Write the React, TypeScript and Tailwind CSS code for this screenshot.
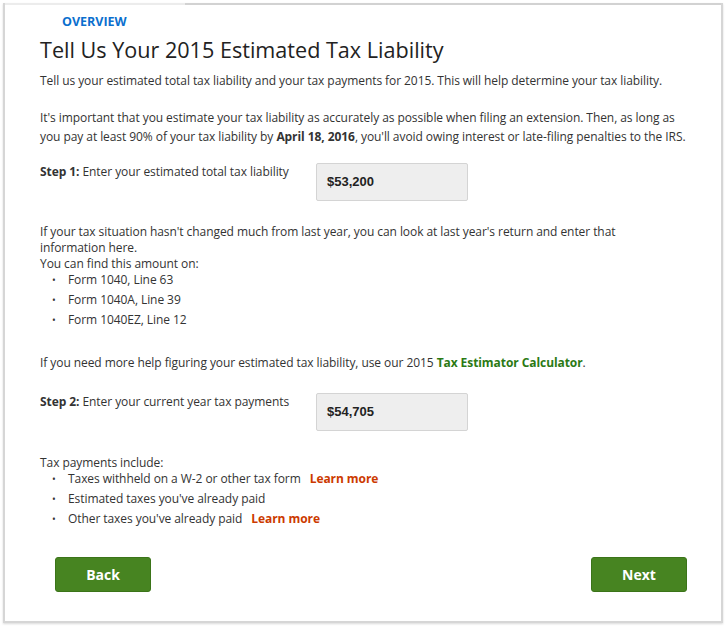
const bodyFont = { fontFamily: '"Open Sans", "Noto Sans", sans-serif' };

type Item = { text: string; learn?: boolean };

const liabilityForms: Item[] = [
  { text: "Form 1040, Line 63" },
  { text: "Form 1040A, Line 39" },
  { text: "Form 1040EZ, Line 12" },
];

const paymentItems: Item[] = [
  { text: "Taxes withheld on a W-2 or other tax form", learn: true },
  { text: "Estimated taxes you've already paid" },
  { text: "Other taxes you've already paid", learn: true },
];

const Bullets = ({ items }: { items: Item[] }) => (
  <ul className="flex flex-col gap-[4px]">
    {items.map((item) => (
      <li key={item.text} className="flex items-center pl-[12px]">
        <span className="w-[16px] text-[10px]">•</span>
        <span>{item.text}</span>
        {item.learn && (
          <a href="#" className="ml-[9px] font-bold text-[#cc3a00]">
            Learn more
          </a>
        )}
      </li>
    ))}
  </ul>
);

const AmountField = ({ label, text, value }: { label: string; text: string; value: string }) => (
  <div className="flex items-start">
    <p className="w-[276px]">
      <b className="font-bold">{label}</b> {text}
    </p>
    <div className="w-[152px] h-[38px] -mt-[1px] flex items-center px-[10px] bg-[#eeeeee] border border-[#d4d4d4] rounded-[2px] font-['Liberation_Sans',Arial,sans-serif] font-bold text-[13px] tracking-normal text-[#222]">
      {value}
    </div>
  </div>
);

const App = () => {
  return (
    <div className="bg-white w-[728px] h-[626px] p-[3px]" style={bodyFont}>
      <div className="flex flex-col w-[720px] h-[620px] border-x-2 border-b-2 border-[#d6d6d6] shadow-[0_1px_2px_rgba(0,0,0,0.15)] bg-white text-[12px] tracking-[-0.07px] leading-[16px] text-[#333]">
        <div className="flex h-[2px]">
          <div className="w-[180px] bg-[#ececec]" />
          <div className="flex-1 bg-[#d2d2d2]" />
        </div>
        <div className="flex flex-col flex-1 pl-[35px] pr-[34px]">
          <div className="pl-[22px] pt-[9px] text-[12.5px] tracking-normal font-bold text-[#0b6fce] leading-[16px]">OVERVIEW</div>
          <h1 className="mt-[6px] text-[21.6px] tracking-normal leading-[28px] text-[#222]">Tell Us Your 2015 Estimated Tax Liability</h1>
          <p className="mt-[9px]">
            Tell us your estimated total tax liability and your tax payments for 2015. This will help determine your tax liability.
          </p>
          <p className="mt-[19px] leading-[19px]">
            It's important that you estimate your tax liability as accurately as possible when filing an extension. Then, as long as you pay at least 90% of your tax liability by{" "}
            <b className="font-bold">April 18, 2016</b>, you'll avoid owing interest or late-filing penalties to the IRS.
          </p>
          <div className="mt-[18px]">
            <AmountField label="Step 1:" text="Enter your estimated total tax liability" value="$53,200" />
          </div>
          <div className="mt-[23px]">
            <p className="max-w-[610px]">
              If your tax situation hasn't changed much from last year, you can look at last year's return and enter that information here.
            </p>
            <p>You can find this amount on:</p>
            <Bullets items={liabilityForms} />
          </div>
          <p className="mt-[27px]">
            If you need more help figuring your estimated tax liability, use our 2015{" "}
            <a href="#" className="font-bold text-[#2b7a14]">Tax Estimator Calculator</a>.
          </p>
          <div className="mt-[23px]">
            <AmountField label="Step 2:" text="Enter your current year tax payments" value="$54,705" />
          </div>
          <div className="mt-[24px]">
            <p>Tax payments include:</p>
            <Bullets items={paymentItems} />
          </div>
          <div className="flex justify-between mt-[30px] pl-[15px]">
            <button className="w-[96px] h-[35px] bg-[#478421] border border-[#3b7419] rounded-[3px] text-white font-bold text-[14px] tracking-normal">
              Back
            </button>
            <button className="w-[96px] h-[35px] bg-[#478421] border border-[#3b7419] rounded-[3px] text-white font-bold text-[14px] tracking-normal">
              Next
            </button>
          </div>
        </div>
      </div>
    </div>
  );
};

export default App;
